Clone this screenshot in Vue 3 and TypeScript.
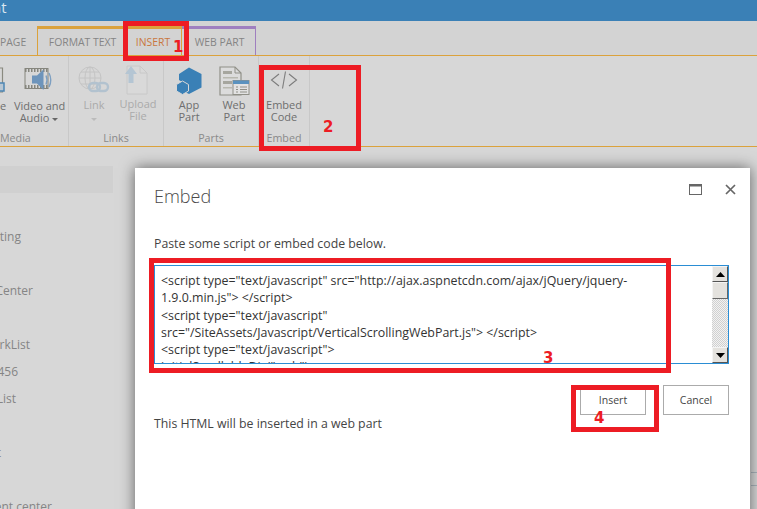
<script setup lang="ts">
const navRows: { text: string; end: number }[] = [
  { text: 'ting', end: 21 },
  { text: '', end: 0 },
  { text: 'Center', end: 33 },
  { text: '', end: 0 },
  { text: 'rkList', end: 30 },
  { text: '456', end: 18 },
  { text: 'List', end: 16 },
  { text: '', end: 0 },
  { text: 't', end: 1 },
  { text: '', end: 0 },
  { text: 'ent center', end: 52 },
]
const codeLines: string[] = [
  '<script type="text/javascript" src="http://ajax.aspnetcdn.com/ajax/jQuery/jquery-',
  '1.9.0.min.js"> </' + 'script>',
  '<script type="text/javascript"',
  'src="/SiteAssets/Javascript/VerticalScrollingWebPart.js"> </' + 'script>',
  '<script type="text/javascript">',
  'initialScrollableDiv("web");',
]
</script>

<template>
  <div class="page">
    <div class="topbar"><span class="site">nt</span></div>
    <div class="tabs">
      <div class="tab tab-page">PAGE</div>
      <div class="tab tab-format">FORMAT TEXT</div>
      <div class="tab tab-insert">INSERT</div>
      <div class="tab tab-web">WEB PART</div>
    </div>
    <div class="ribbon">
      <div class="group g-media">
        <div class="btns">
          <div class="btn b-image">
            <svg class="icon" width="6" height="26" viewBox="0 0 6 26"><path d="M-3 1H2.5V25H-3" fill="none" stroke="#8a8a80" stroke-width="1.2"/><rect x="-3" y="16" width="7" height="8" fill="#b8c6d2" stroke="#4d86b4" stroke-width="1.5"/></svg>
            <div class="label">e</div>
          </div>
          <div class="btn b-video">
            <svg class="icon" width="30" height="24" viewBox="0 0 30 24">
              <rect x="1" y="1.5" width="23" height="20" fill="none" stroke="#85857d" stroke-width="1"/>
              <path d="M1 3.5H24M1 19.5H24" stroke="#85857d" stroke-width="3" stroke-dasharray="1.5 1.5"/>
              <path d="M8 8.5H13L19.5 2.5V23L13 16.5H8Z" fill="#6d94bb"/>
              <path d="M22 8.5Q24 13 22 17.5M25 6Q28.5 13 25 20" fill="none" stroke="#7d9fc1" stroke-width="1.4"/>
            </svg>
            <div class="label">Video and<br />Audio <span class="caret-inline"></span></div>
          </div>
        </div>
        <div class="gname">Media</div>
      </div>
      <div class="group g-links">
        <div class="btns">
          <div class="btn b-link">
            <svg class="icon" width="32" height="30" viewBox="0 0 32 30">
              <g fill="none" stroke="#c4c4c4" stroke-width="1">
                <circle cx="12" cy="12" r="11"/>
                <ellipse cx="12" cy="12" rx="5" ry="11"/>
                <path d="M1 12H23M3 6H21M3 18H21M12 1V23"/>
              </g>
              <g fill="none" stroke="#b2c2cf" stroke-width="2.4">
                <rect x="11" y="17" width="11" height="8" rx="4"/>
                <rect x="19" y="17" width="11" height="8" rx="4"/>
              </g>
            </svg>
            <div class="label dim">Link<br /><span class="caret-block"></span></div>
          </div>
          <div class="btn b-upload">
            <svg class="icon" width="24" height="30" viewBox="0 0 24 30">
              <path d="M3 1H16L23 8V29H3Z" fill="#d9d9d9" stroke="#c8c8c8"/>
              <path d="M16 1V8H23" fill="none" stroke="#c8c8c8"/>
              <path d="M1 9L7 1L13 9H9.5V18H4.5V9Z" fill="#b4c5d3"/>
            </svg>
            <div class="label dim">Upload<br />File</div>
          </div>
        </div>
        <div class="gname">Links</div>
      </div>
      <div class="group g-parts">
        <div class="btns">
          <div class="btn b-app">
            <svg class="icon" width="28" height="28" viewBox="0 0 28 28">
              <path d="M14 0.5L26.5 7V20.5L14 27L10 25V17L4 13V7Z" fill="#3a80b6"/>
              <path d="M7.5 14L13.5 17.5V24L7.5 27.5L1.5 24V17.5Z" fill="#3a80b6" stroke="#d7d7d7" stroke-width="1"/>
            </svg>
            <div class="label">App<br />Part</div>
          </div>
          <div class="btn b-web">
            <svg class="icon" width="31" height="30" viewBox="0 0 31 30">
              <path d="M1 1H16L22 7V29H1Z" fill="#dcdcdc" stroke="#909088" stroke-width="1.2"/>
              <path d="M16 1V7H22" fill="none" stroke="#909088"/>
              <rect x="4" y="5" width="9" height="3" fill="#a6a69e"/>
              <rect x="4" y="11" width="15" height="1.5" fill="#b8b8af"/>
              <rect x="4" y="15" width="9" height="3" fill="#a6a69e"/>
              <rect x="4" y="21" width="9" height="1.5" fill="#b8b8af"/>
              <rect x="14" y="14.5" width="16" height="14" fill="#e2e2e2" stroke="#909088"/>
              <rect x="14" y="14.5" width="16" height="3.5" fill="#5a92bf"/>
              <path d="M17 21H19M21 21H28M17 23.5H19M21 23.5H28M17 26H19M21 26H28" stroke="#909088"/>
            </svg>
            <div class="label">Web<br />Part</div>
          </div>
        </div>
        <div class="gname">Parts</div>
      </div>
      <div class="group g-embed">
        <div class="btns">
          <div class="btn b-embed">
            <svg class="icon" width="28" height="18" viewBox="0 0 28 18">
              <path d="M9 3L1.5 9L9 15M19 3L26.5 9L19 15" fill="none" stroke="#7c7c7c" stroke-width="1.1"/>
              <path d="M15.5 0.5L12.5 17.5" stroke="#7c7c7c" stroke-width="1.1"/>
            </svg>
            <div class="label">Embed<br />Code</div>
          </div>
        </div>
        <div class="gname">Embed</div>
      </div>
    </div>
    <div class="nav">
      <div class="nav-head"></div>
      <div class="nav-list">
        <div v-for="(row, i) in navRows" :key="i" class="nav-row" :style="{ width: row.end + 'px' }">{{ row.text }}</div>
      </div>
    </div>

    <div class="right-lines"><i></i><i></i></div>

    <section class="dialog">
      <header class="dlg-head">
        <h1 class="dlg-title">Embed</h1>
        <div class="dlg-ctrls">
          <svg width="13" height="11" viewBox="0 0 13 11"><rect x="0.5" y="0.5" width="12" height="10" fill="none" stroke="#666"/><rect x="0" y="0" width="13" height="2.5" fill="#666"/></svg>
          <svg width="11" height="11" viewBox="0 0 11 11"><path d="M1 1L10 10M10 1L1 10" stroke="#666" stroke-width="1.7"/></svg>
        </div>
      </header>
      <p class="dlg-help">Paste some script or embed code below.</p>
      <div class="code-box">
        <div class="code-text">
          <div v-for="(line, i) in codeLines" :key="i" class="code-line">{{ line }}</div>
        </div>
        <div class="scroll">
          <div class="sb-btn"><svg width="9" height="5" viewBox="0 0 9 5"><path d="M4.5 0L9 5H0Z" fill="#000"/></svg></div>
          <div class="sb-thumb"></div>
          <div class="sb-track"></div>
          <div class="sb-btn"><svg width="9" height="5" viewBox="0 0 9 5"><path d="M4.5 5L9 0H0Z" fill="#000"/></svg></div>
        </div>
      </div>
      <div class="dlg-foot">
        <span class="foot-note">This HTML will be inserted in a web part</span>
        <div class="foot-btns">
          <button class="dlg-btn btn-insert">Insert</button>
          <button class="dlg-btn">Cancel</button>
        </div>
      </div>
    </section>

    <div class="mark m1"></div><span class="num n1">1</span>
    <div class="mark m2"></div><span class="num n2">2</span>
    <div class="mark m3"></div><span class="num n3">3</span>
    <div class="mark m4"></div><span class="num n4">4</span>
  </div>
</template>

<style>
html, body { margin: 0; background: #d7d7d7; overflow: hidden; }
</style>

<style scoped>
.page {
  position: relative;
  width: 757px;
  height: 509px;
  overflow: hidden;
  background: #d7d7d7;
  font-family: "Open Sans", "Liberation Sans", sans-serif;
  font-size: 11px;
  color: #666;
}
.topbar { height: 21px; background: #3a80b6; color: #d9e6f0; font-size: 15px; line-height: 15px; overflow: hidden; }
.site { display: block; margin-left: -8px; }
.tabs { display: flex; height: 34px; background: #d3d3d3; border-bottom: 1px solid #dba23c; box-sizing: content-box; }
.tab { box-sizing: border-box; height: 29px; margin-top: 5px; line-height: 26px; font-size: 10.4px; color: #858585; text-align: center; white-space: nowrap; }
.tab-page { width: 37px; text-align: right; padding-right: 13px; border-top: 3px solid transparent; margin-left: 0; overflow: hidden; }
.tab-format { width: 85px; border-top: 3px solid #dba23c; border-left: 1px solid #dba23c; padding-left: 5px; }
.tab-insert { width: 60px; border-top: 3px solid #dba23c; border-right: 1px solid #dba23c; color: #c9773f; padding-left: 3px; }
.tab-web { width: 74px; border-top: 3px solid #9f7fbf; border-right: 1px solid #9f7fbf; padding-left: 2px; }
.ribbon { display: flex; height: 90px; box-sizing: content-box; border-bottom: 1px solid #dba23c; background: #d7d7d7; }
.group { position: relative; box-sizing: border-box; height: 90px; border-right: 1px solid #c8c8c8; overflow: hidden; }
.g-media { width: 69px; }
.g-links { width: 95px; }
.g-parts { width: 95px; }
.g-embed { width: 51px; }
.btns { display: flex; height: 74px; }
.btn { text-align: center; line-height: 11.5px; font-size: 11px; color: #6e6e6e; white-space: nowrap; }
.icon { display: block; margin: 0 auto; }
.label { margin-top: 0; }
.dim { color: #aaa; }
.b-image { width: 14px; text-align: left; }
.b-image .icon { margin: 11px 0 0 0; }
.b-image .label { margin-top: 7px; }
.b-video { width: 50px; }
.b-video .icon { margin-top: 11px; margin-left: 10px; }
.b-video .label { margin-top: 9px; }
.b-link { width: 34px; margin-left: 8px; }
.b-link .icon { margin-top: 10px; }
.b-link .label { margin-top: 3px; }
.b-upload { width: 40px; margin-left: 7px; }
.b-upload .icon { margin-top: 9px; margin-left: 6px; }
.b-upload .label { margin-top: 3px; }
.b-app { width: 30px; margin-left: 10px; }
.b-app .icon { margin-top: 11px; }
.b-app .label { margin-top: 4px; }
.b-web { width: 32px; margin-left: 14px; }
.b-web .icon { margin-top: 10px; }
.b-web .label { margin-top: 3px; }
.b-embed { width: 50px; }
.b-embed .icon { margin-top: 15px; margin-left: 11px; }
.b-embed .label { margin-top: 10px; }
.caret-inline { display: inline-block; border: 3px solid transparent; border-top: 3px solid #666; border-bottom: 0; vertical-align: 1px; }
.caret-block { display: inline-block; border: 3px solid transparent; border-top: 3px solid #bbb; border-bottom: 0; }
.gname { position: absolute; left: 0; right: 0; bottom: 0; text-align: center; font-size: 10.7px; line-height: 16px; color: #8a8a8a; }
.g-media .gname { text-align: left; }
.nav { padding-top: 19px; }
.nav-head { width: 113px; height: 27px; background: #d0d0d0; }
.nav-list { display: grid; grid-auto-rows: 27px; margin-top: 29.5px; font-size: 12px; color: #858585; }
.nav-row { display: flex; justify-content: flex-end; align-items: center; white-space: nowrap; overflow: visible; }
.right-lines { position: absolute; right: 0; top: 472px; width: 6px; }
.right-lines i { display: block; height: 1px; background: #aab4bc; margin-bottom: 12px; }
.dialog {
  position: absolute;
  left: 135px;
  top: 168px;
  width: 615px;
  height: 360px;
  background: #fff;
  box-shadow: 0 0 14px rgba(0, 0, 0, 0.55);
  box-sizing: border-box;
  padding: 15px 21px 0 19px;
  color: #444;
}
.dlg-head { display: flex; justify-content: space-between; align-items: flex-start; }
.dlg-title { margin: 0; font-size: 18px; line-height: 26px; font-weight: 300; color: #4a4a4a; font-family: "Open Sans", sans-serif; }
.dlg-ctrls { display: flex; gap: 23px; margin-top: 1px; margin-right: -7px; }
.dlg-help { margin: 26px 0 0; font-size: 12.3px; line-height: 18px; color: #444; }
.code-box { display: flex; margin-top: 12px; height: 99px; box-sizing: border-box; border: 1px solid #2a8dd4; width: 575px; overflow: hidden; }
.code-text { flex: 1; padding: 6px 0 0 6px; font-size: 12.4px; line-height: 17.3px; color: #333; overflow: hidden; white-space: nowrap; }
.scroll { width: 16px; display: flex; flex-direction: column; background: #e8e8e8; }
.sb-btn { height: 16px; display: flex; align-items: center; justify-content: center; background: #e4e2de; border: 1px solid; border-color: #f4f4f4 #555 #555 #f4f4f4; box-sizing: border-box; }
.sb-thumb { height: 17px; background: #e4e2de; border: 1px solid; border-color: #f4f4f4 #666 #666 #f4f4f4; box-sizing: border-box; }
.sb-track { flex: 1; background: repeating-conic-gradient(#d0d0d0 0% 25%, #f2f2f2 0% 50%) 0 0 / 2px 2px; }
.dlg-foot { display: flex; justify-content: space-between; width: 575px; margin-top: 21px; }
.foot-note { margin-top: 31px; font-size: 12.3px; line-height: 16px; color: #444; }
.foot-btns { display: flex; gap: 17px; }
.dlg-btn { width: 66px; height: 30px; padding: 0; background: #fff; border: 1px solid #ababab; font: 10.5px "Open Sans", sans-serif; color: #444; }
.mark { position: absolute; box-sizing: border-box; border: 5px solid #ed1c24; }
.m1 { left: 123px; top: 21px; width: 66px; height: 40px; }
.m2 { left: 259px; top: 65px; width: 102px; height: 86px; }
.m3 { left: 149px; top: 258px; width: 522px; height: 115px; }
.m4 { left: 571px; top: 385px; width: 88px; height: 47px; }
.num { position: absolute; font: 700 15px/16px "DejaVu Sans", sans-serif; color: #ed1c24; }
.n1 { left: 173px; top: 39px; }
.n2 { left: 323px; top: 119px; }
.n3 { left: 543px; top: 350px; }
.n4 { left: 594px; top: 410px; }
</style>
